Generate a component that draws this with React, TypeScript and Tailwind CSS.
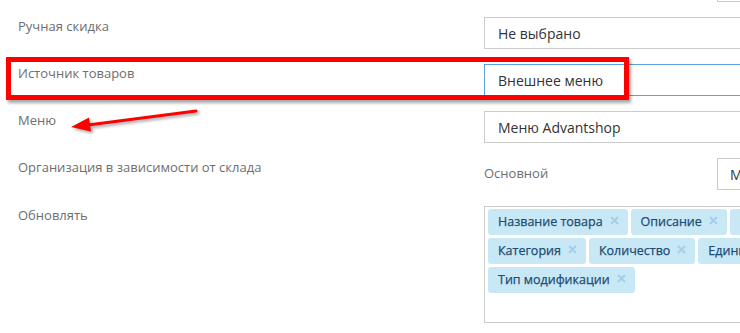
import React from 'react';

const rowsTags: string[][] = [
  ['Название товара', 'Описание', 'Цена'],
  ['Категория', 'Количество', 'Единица измерения'],
  ['Тип модификации'],
];

const Tag: React.FC<{ label: string }> = ({ label }) => (
  <div className="shrink-0 h-[26px] flex items-center gap-[7px] pl-[10px] pr-[9px] rounded-[3px] bg-[#c9e8f6] text-[12.5px] text-[#1d4d73]">
    <span className="whitespace-nowrap [-webkit-text-stroke:0.25px_#1d4d73]">{label}</span>
    <svg width="9" height="9" viewBox="0 0 9 9" className="-mt-[4px]">
      <path d="M1 1 L8 8 M8 1 L1 8" stroke="#a3cfe9" strokeWidth="2" />
    </svg>
  </div>
);

const SelectBox: React.FC<{ value: string; active?: boolean }> = ({ value, active }) => (
  <div
    className={
      'shrink-0 w-[320px] h-[32px] border flex items-center pl-[13px] text-[14px] text-[#333] ' +
      (active ? 'border-[#5aa2e0]' : 'border-[#cccccc]')
    }
  >
    {value}
  </div>
);

const Label: React.FC<{ text: string }> = ({ text }) => (
  <div className="shrink-0 w-[484px] pl-[18px] text-[13px] leading-[18px] text-[#6e6e6e]">{text}</div>
);

export default function App() {
  return (
    <div className="relative w-[740px] h-[333px] overflow-hidden bg-white font-['Open_Sans',sans-serif]">
      <div className="flex justify-end h-[2px]">
        <div className="w-[23px] h-[2px] border-l border-b border-[#cccccc]" />
      </div>

      <div className="flex flex-col pt-[15px]">
        <div className="flex">
          <Label text="Ручная скидка" />
          <SelectBox value="Не выбрано" />
        </div>
        <div className="flex mt-[15px]">
          <Label text="Источник товаров" />
          <SelectBox value="Внешнее меню" active />
        </div>
        <div className="flex mt-[15px]">
          <Label text="Меню" />
          <SelectBox value="Меню Advantshop" />
        </div>
        <div className="flex mt-[15px]">
          <Label text="Организация в зависимости от склада" />
          <div className="flex h-[32px] items-center">
            <span className="w-[233px] shrink-0 text-[13px] text-[#6e6e6e]">Основной</span>
            <div className="shrink-0 w-[120px] h-[32px] border border-[#cccccc] flex items-center pl-[12px] text-[14px] text-[#333]">
              Московский
            </div>
          </div>
        </div>
        <div className="flex mt-[16px]">
          <Label text="Обновлять" />
          <div className="shrink-0 w-[420px] h-[117px] border border-[#cccccc] pt-[2px] pl-[3px] flex flex-col gap-[3px]">
            {rowsTags.map((row, i) => (
              <div key={i} className="flex gap-[3px]">
                {row.map((t) => (
                  <Tag key={t} label={t} />
                ))}
              </div>
            ))}
          </div>
        </div>
      </div>

      <div className="absolute left-[6px] top-[57px] w-[623px] h-[43px] border-[5px] border-[#ff0000] shadow-[2px_3px_3px_rgba(0,0,0,0.35)]" />

      <svg className="absolute left-0 top-0 drop-shadow-[2px_2px_1.5px_rgba(0,0,0,0.35)]" width="740" height="333">
        <line x1="196" y1="111" x2="88" y2="125" stroke="#ff0000" strokeWidth="3" strokeLinecap="round" />
        <polygon points="71,127 89,117.5 91,131.5" fill="#ff0000" />
      </svg>
    </div>
  );
}
